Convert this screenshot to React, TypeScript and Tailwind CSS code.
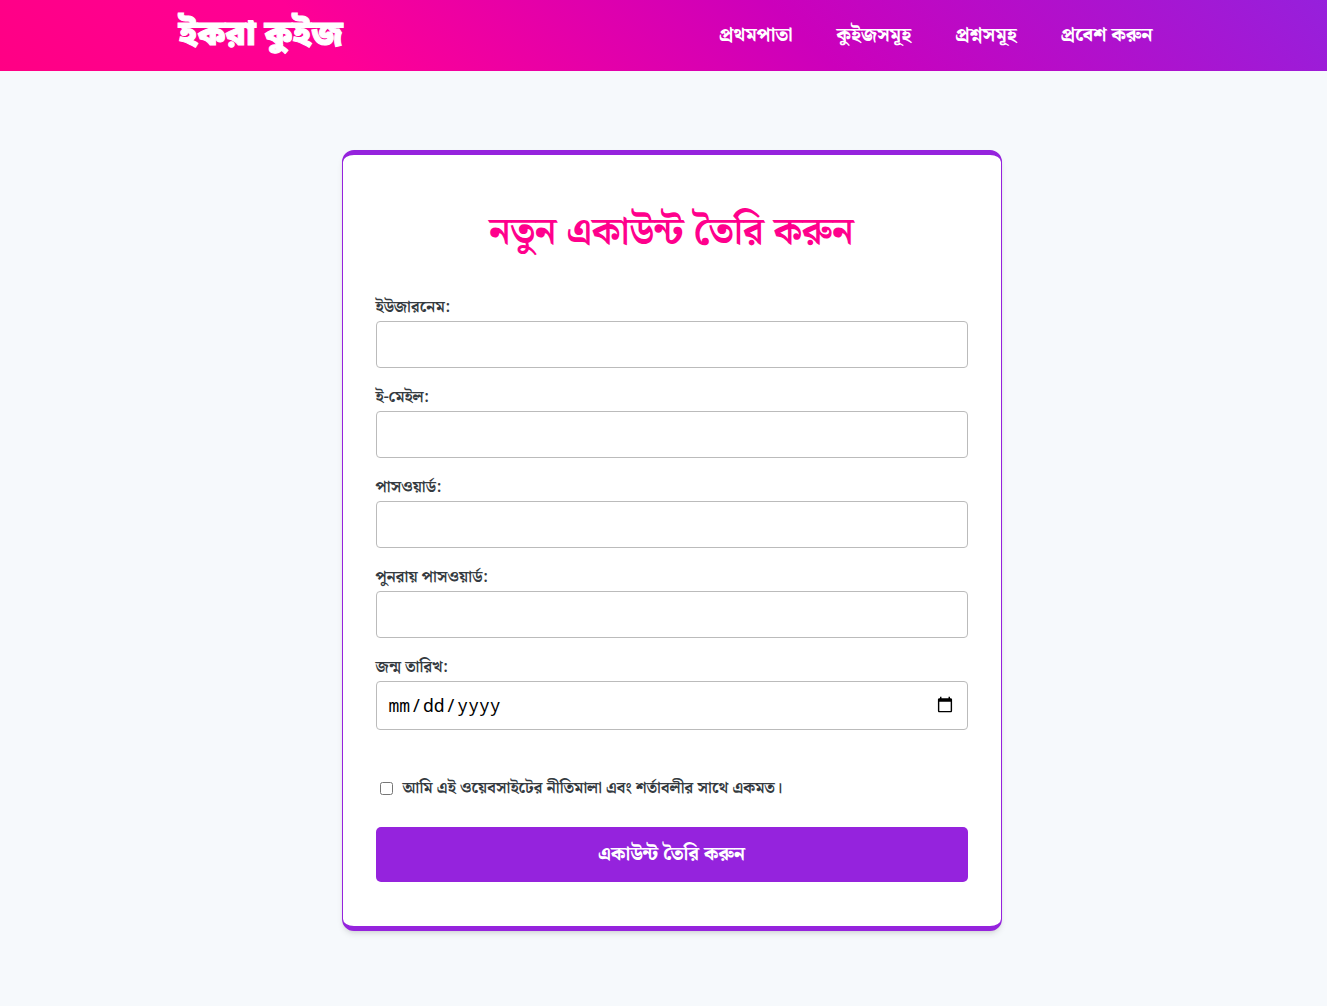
const navLinks = [
  { label: "প্রথমপাতা", href: "#home" },
  { label: "কুইজসমূহ", href: "#quizzes" },
  { label: "প্রশ্নসমূহ", href: "#questions" },
  { label: "প্রবেশ করুন", href: "#login" },
];

const fields = [
  { id: "username", label: "ইউজারনেম:", type: "text" },
  { id: "email", label: "ই-মেইল:", type: "email" },
  { id: "password", label: "পাসওয়ার্ড:", type: "password" },
  { id: "password-confirm", label: "পুনরায় পাসওয়ার্ড:", type: "password" },
];

function Header() {
  return (
    <header className="bg-linear-[45deg,#ff0084,#ff0095_25%,#cc00bb_60%,#9620dc] pl-1 text-white">
      <div className="mx-auto flex h-[71px] max-w-[974px] items-center justify-between pt-0.5">
        <a
          href="#home"
          className="font-['Noto_Sans_Bengali','Noto_Sans',sans-serif] text-[34px] font-black [-webkit-text-stroke:1px_white]"
        >
          ইকরা কুইজ
        </a>
        <nav className="flex gap-11 text-[19px] font-extrabold">
          {navLinks.map((link) => (
            <a key={link.href} href={link.href}>
              {link.label}
            </a>
          ))}
        </nav>
      </div>
    </header>
  );
}

export default function App() {
  return (
    <div className="min-h-screen bg-[#f6f9fc] font-['Noto_Serif_Bengali','Liberation_Serif',serif] text-[#343a40]">
      <Header />
      <main className="py-[79px] pr-4 pl-8">
        <form className="mx-auto max-w-[660px] rounded-xl border border-y-5 border-[#9523dd] bg-white px-[33px] pt-[42px] pb-11 shadow-md">
          <h1 className="mb-[25px] text-center text-[38px] leading-[72px] font-bold text-[#ff008c]">
            নতুন একাউন্ট তৈরি করুন
          </h1>
          {fields.map((field) => (
            <div key={field.id} className="mb-4">
              <label htmlFor={field.id} className="block leading-[27px] font-bold">
                {field.label}
              </label>
              <input
                id={field.id}
                type={field.type}
                className="block h-[47px] w-full rounded border border-[#bbb] px-3"
              />
            </div>
          ))}
          <label htmlFor="birthdate" className="block leading-[27px] font-bold">
            জন্ম তারিখ:
          </label>
          <input
            id="birthdate"
            type="date"
            className="block h-[49px] w-full rounded border border-[#bbb] px-[11px] pb-0.5 font-['Noto_Sans_Mono','DejaVu_Sans_Mono',monospace] text-lg text-black"
          />
          <div className="mt-[45px] mb-[25px] ml-1 flex items-center gap-2.5">
            <input id="terms" type="checkbox" />
            <label htmlFor="terms" className="leading-[27px] font-bold">
              আমি এই ওয়েবসাইটের নীতিমালা এবং শর্তাবলীর সাথে একমত।
            </label>
          </div>
          <button
            type="submit"
            className="block h-[55px] w-full rounded-[5px] bg-[#9523dd] pt-0.5 text-[19px] font-extrabold text-white"
          >
            একাউন্ট তৈরি করুন
          </button>
        </form>
      </main>
    </div>
  );
}
